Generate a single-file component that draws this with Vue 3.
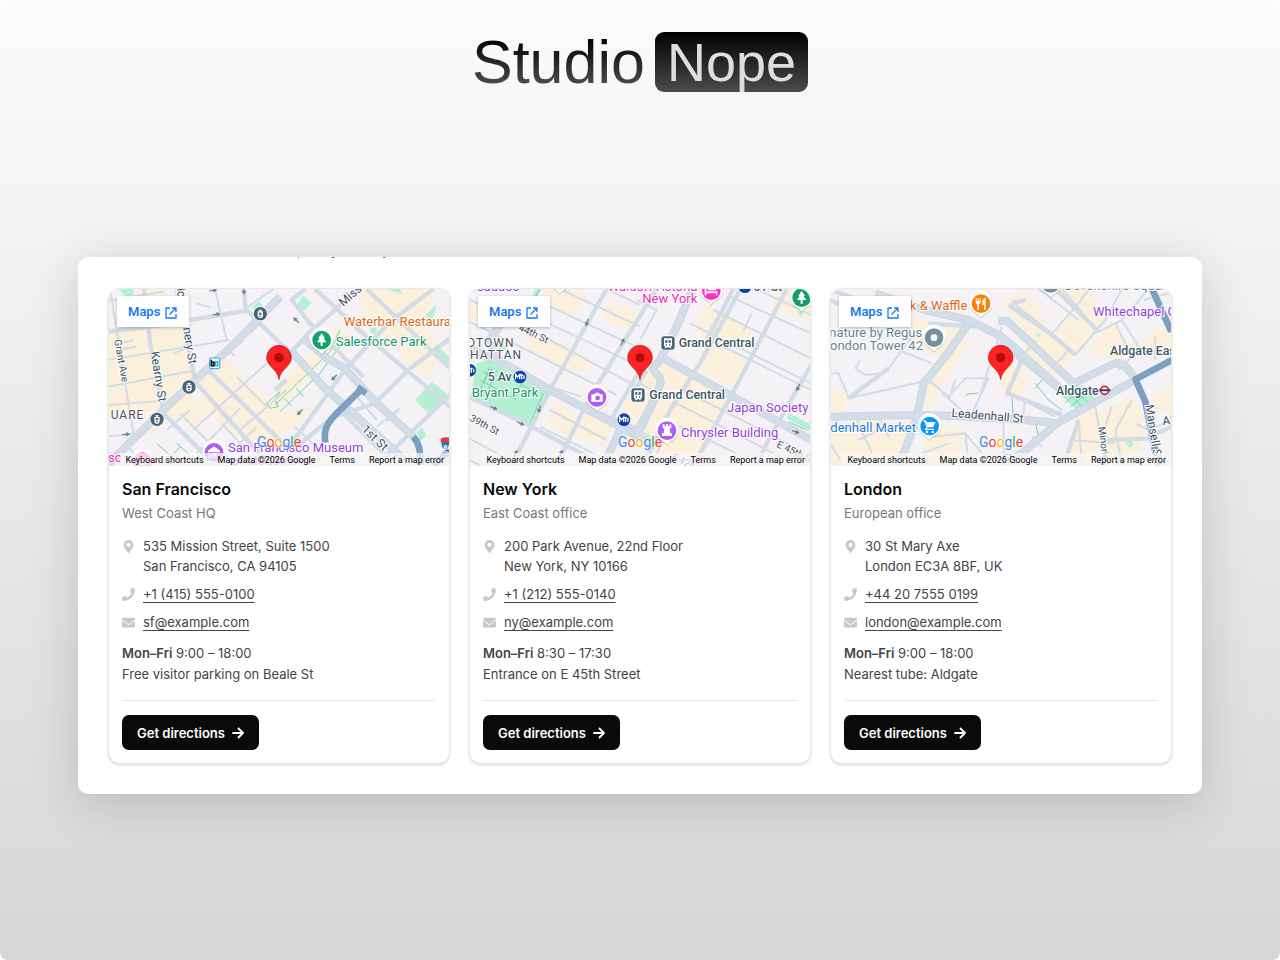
<script setup>
const pin = 'M0 66C-3 48-10 42-22 29C-32 18-37 10-37 0A37 37 0 1 1 37 0C37 10 32 18 22 29C10 42 3 48 0 66Z'
const drop = 'M0 42C-6 32-18 29-26 20A35 35 0 1 1 26 20C18 29 6 32 0 42Z'

const offices = [
  {
    city: 'San Francisco', role: 'West Coast HQ', view: '24 27 1026 531', pinX: 537,
    address: ['535 Mission Street, Suite 1500', 'San Francisco, CA 94105'],
    phone: '+1 (415) 555-0100', mail: 'sf@example.com',
    hours: '9:00 – 18:00', note: 'Free visitor parking on Beale St',
    blocks: 'M24 155L250 130L285 300L190 390L24 405ZM75 55L135 27L200 27L200 70L75 90ZM300 290L372 232L450 310L540 390L540 480L400 470L300 370ZM150 400L250 330L330 400L290 450L230 400L170 460L110 460ZM765 27H985L1000 60L965 130L1025 200L990 290L915 250L895 200L820 145ZM525 330L710 140L750 165L570 350L525 400ZM525 400L645 380L570 450L525 470Z',
    greens: 'M57 27H100V48H75ZM453 85L478 62L495 90ZM590 75L610 47L634 68L612 92ZM945 360L995 305L1047 345L990 405ZM1005 190L1050 235V255L1008 215ZM860 27H900L905 42ZM974 110L1010 72L1000 115ZM810 145L830 142L828 162L812 160ZM950 458L965 442L980 465L960 485Z',
    thin: 'M30 27L100 460M24 240L390 180M24 320L280 272M24 375L190 362M24 470L110 460M24 62L190 35M345 27L380 180M180 80V130M220 220L270 200M410 290L500 380M365 430L430 500M430 180L390 215L405 228M450 160L480 130M290 70L330 82M520 27L430 90M240 400L350 510M200 450L270 390M280 450L500 250M290 520L420 385M420 450L560 330M370 540L470 440M725 100L780 160M830 440L900 385L860 425M585 440L680 530M770 350L830 420M60 190L100 180M50 210L110 200',
    mid: 'M132 27L152 200L190 390M230 27L285 300M24 155L250 128M270 120L440 92M430 27L438 92M280 300L510 556M320 265L580 520M435 85L525 175L575 220M525 270L625 160L705 90L775 27M525 330L560 300M615 27L575 60L630 130L790 290M800 27L1050 265M645 27L800 170L1050 380M560 510L735 270L865 130L1000 27M590 500L700 410L825 370L925 270L1050 175M830 556L1050 345M730 400L870 540M190 400L330 540',
    wide: 'M540 50L420 175L190 390L24 552M575 215L675 325L920 545M610 175L680 235L735 265M735 265L825 365L940 470',
    highway: 'M780 332L708 402C680 432 670 450 676 488M940 470C965 500 960 530 960 556M1050 510L1000 556M772 322L798 340',
    trail: 'M525 375L690 215L720 150M540 395L660 280L740 170M555 355L575 380M590 325L610 350M640 275L660 290M675 230L695 240M500 370L540 335L525 360L535 380L510 385ZM90 505L110 530M170 490L215 530L240 500M230 490L270 525M720 90L760 140M470 480L490 500',
    labels: [
      { t: 'UARE', x: 32, y: 416, c: 'area' }, { t: 'Kearny St', x: 152, y: 216, r: 81, c: 'road' },
      { t: 'Grant Ave', x: 43, y: 180, r: 80, c: 'road small' }, { t: 'nery St', x: 249, y: 144, r: 81, c: 'road' },
      { t: 'lc', x: 230, y: 26, r: 81, c: 'road' },
      { t: 'Miss', x: 730, y: 81, r: -42, c: 'road' }, { t: '1st St', x: 783, y: 450, r: 44, c: 'road' },
      { t: 'Waterbar Restaurant', x: 731, y: 138, c: 'orange' }, { t: 'Salesforce Park', x: 707, y: 199, c: 'green' },
      { t: 'San Francisco Museum', x: 384, y: 517, c: 'purple' }, { t: 'of Modern Art', x: 394, y: 556, c: 'purple' },
      { t: 'sc', x: 24, y: 545, c: 'pink' }
    ],
    pins: [{ x: 665, y: 180, f: '#0fa36b', i: 'tree' }, { x: 342, y: 517, f: '#b15cf4', i: 'museum' }, { x: 128, y: 545, f: '#ff50c8', i: 'dot' }],
    stops: [{ x: 481, y: 101 }, { x: 267, y: 321 }, { x: 171, y: 418 }],
    arrows: [{ x: 350, y: 103, r: -8 }, { x: 340, y: 31, r: -8 }, { x: 432, y: 33, r: 85 }, { x: 79, y: 463, r: -5 }, { x: 588, y: 120, r: 225 }, { x: 702, y: 293, r: 135 }, { x: 599, y: 397, r: 135 }]
  },
  {
    city: 'New York', role: 'East Coast office', view: '27 27 1026 531', pinX: 540,
    address: ['200 Park Avenue, 22nd Floor', 'New York, NY 10166'],
    phone: '+1 (212) 555-0140', mail: 'ny@example.com',
    hours: '8:30 – 17:30', note: 'Entrance on E 45th Street',
    blocks: 'M240 27H360L380 60L340 110L270 85ZM445 60L530 100L510 150L430 120ZM200 155L265 170L395 235L375 280L310 270L210 215ZM27 70L110 85L90 120L27 110ZM280 365L350 395L330 470L260 430ZM385 385L465 425L430 500L350 470ZM500 320L600 250L810 350L770 420L640 540L480 430ZM740 75L800 100L880 150L850 210L740 180L700 140ZM740 185L860 240L820 320L700 260ZM940 27H1053V125L940 85ZM27 440L45 450L27 470ZM620 390L770 450L720 556L590 530Z',
    greens: 'M50 250L85 240L262 338L205 434L30 360ZM225 27H245L232 50L217 47ZM985 400L1053 432V455L980 415ZM1012 95L1030 85L1025 110ZM110 205L130 190L140 210Z',
    thin: 'M27 58L270 180L540 325M27 125L110 165L350 285L470 345M160 80L540 260M205 50L540 205M300 27L540 140M27 475L180 556M27 540L60 556M240 440L420 530M270 390L440 480M300 340L450 410M440 27L540 75M750 180L1053 330M690 130L1053 310M760 90L1053 235M810 50L1053 160M890 27L1053 105M660 325L1000 500M650 370L960 530M640 430L850 530M720 290L800 330M850 155L875 100M530 60L590 90L540 180M540 310L600 345L550 450M270 320L365 350M770 450L700 556M590 520L640 430M500 430L570 470',
    mid: 'M440 27L270 330L155 556M590 27L390 350L290 556M740 180L820 27M842 27L720 250L630 390L550 556M980 27L818 340L700 556M1053 255L925 480L890 556M27 350L205 435L420 550M540 270L455 415L540 450M27 30L60 27M560 270L520 340',
    wide: 'M27 205L150 260L270 330L480 440L570 490M698 27L650 140L600 240L578 265C585 285 610 290 600 315C590 350 545 430 528 460M608 235L810 345L1053 480M490 430L430 556M165 75L80 190M120 245L80 175',
    highway: '',
    trail: 'M90 260L65 320M110 270L85 330M60 300L170 360M70 275L120 305M185 315L230 340M210 430L250 340M165 350L190 300M55 335L95 265M985 425L1040 450M240 27L220 60',
    labels: [
      { t: 'esaudos', x: 30, y: 33, c: 'purple' }, { t: 'Waldorf Astoria', x: 443, y: 32, c: 'pink' },
      { t: 'New York', x: 547, y: 70, c: 'pink' }, { t: '51 St', x: 880, y: 34, c: 'station' },
      { t: '44th St', x: 174, y: 149, r: 26, c: 'road small' }, { t: 'DTOWN', x: 22, y: 202, c: 'area' },
      { t: 'HATTAN', x: 30, y: 238, c: 'area' }, { t: '5 Av', x: 83, y: 304, c: 'station' },
      { t: 'Bryant Park', x: 35, y: 350, c: 'green' }, { t: '39th St', x: 27, y: 421, r: 28, c: 'road small' },
      { t: 'Grand Central', x: 656, y: 201, c: 'station' }, { t: 'Grand Central', x: 568, y: 357, c: 'station' },
      { t: 'Japan Society', x: 801, y: 396, c: 'purple' }, { t: 'Chrysler Building', x: 663, y: 471, c: 'purple' },
      { t: 'E 45th St', x: 948, y: 500, r: 25, c: 'road small' }, { t: 'E 42nd St', x: 632, y: 537, r: 25, c: 'road small' }
    ],
    pins: [{ x: 300, y: 0, f: '#78909c', i: 'dot' }, { x: 411, y: 352, f: '#b15cf4', i: 'camera' }, { x: 754, y: 32, f: '#ff2fc4', i: 'bed' }, { x: 1025, y: 53, f: '#0fa36b', i: 'tree' }, { x: 621, y: 452, f: '#b15cf4', i: 'rook' }],
    trains: [{ x: 624, y: 188 }, { x: 534, y: 344 }],
    metros: [{ x: 29, y: 271 }, { x: 180, y: 291 }, { x: 492, y: 419 }, { x: 855, y: 20 }],
    arrows: [{ x: 381, y: 128, r: 110 }, { x: 488, y: 185, r: -65 }, { x: 238, y: 388, r: 110 }, { x: 102, y: 384, r: 25 }, { x: 183, y: 431, r: 25 }, { x: 167, y: 520, r: -65 }, { x: 303, y: 520, r: -65 }, { x: 1014, y: 323, r: 115 }, { x: 1008, y: 456, r: 20 }]
  },
  {
    city: 'London', role: 'European office', view: '24 27 1026 531', pinX: 536,
    address: ['30 St Mary Axe', 'London EC3A 8BF, UK'],
    phone: '+44 20 7555 0199', mail: 'london@example.com',
    hours: '9:00 – 18:00', note: 'Nearest tube: Aldgate',
    blocks: 'M150 27L270 50L260 90L150 60ZM275 115L430 145L370 230L310 220L250 180ZM24 320L75 340L60 400L24 380ZM24 470L100 410L230 430L270 410L240 520L150 556H24ZM310 310L420 180L440 190L350 330L310 400ZM540 60L620 40L690 160L640 180L560 100ZM540 230L620 300L600 350L540 330ZM700 27H800L850 130L830 150L765 225L690 165L760 80ZM610 190L690 160L760 220L700 290L610 220ZM810 410L930 350L965 400L950 556H840L800 480ZM320 430L430 450L400 556H290L310 480ZM960 180L1050 120V200L970 240ZM1000 340L1050 320V400L1000 390ZM760 420L820 380L810 556H740ZM800 200L870 130L930 200L900 240L810 220Z',
    greens: 'M722 350L760 315L820 330L810 370L760 385ZM910 490L920 475L935 490L925 505ZM640 155L655 165L650 172Z',
    thin: 'M24 280H50L80 355M80 355L200 265L285 150M80 355L300 305M100 265L130 285L175 280M100 265L115 240M24 410L280 405M100 410L150 520M170 410L200 470M230 210L330 250M24 490L55 540M110 480L190 440M320 300L380 350L430 295H500L450 400M400 300L380 360M470 360L540 140M360 340L430 400M330 470L430 460L480 520M300 520L380 490M430 460L440 556M580 75L690 160L760 225L850 120L900 27M720 27L830 155L900 120L950 200M690 160L770 70L800 27M650 27L770 120M600 230L555 335L700 410M610 355L600 430M740 210L690 265M640 180L600 230M880 130L930 230L890 270M545 420V556M630 470L660 500M820 380L850 556M930 360L880 450L900 556M770 420L780 556M740 480L880 490M870 380L850 440M980 27L900 120M965 60L1040 40M980 450L1050 420M940 430L1000 460M1000 240V170',
    mid: 'M24 30L160 75M24 60L90 90M320 130L460 140M80 355L200 265M24 408L280 405M530 190L610 250L710 330M610 60L570 70M700 27L830 155M600 240L555 340L720 405M760 225L690 165L560 75M840 480L990 475M610 360L720 405M725 556L770 420M1005 460L1050 440',
    wide: 'M160 40L300 88L440 120L540 170L730 340M440 130L370 230L305 310L280 430L230 556M24 410L280 405L400 408L610 420L705 430L930 305M528 122H555L755 310L875 252C900 240 920 265 940 300M705 430L600 520L540 550',
    highway: 'M1050 240L940 298L970 365L1008 556M990 27L1048 155',
    trail: 'M430 348C445 335 455 345 470 338M640 310L680 360L720 390M680 275L640 325M570 355L575 430M640 430L650 470M735 335L780 380M750 320L800 370M730 370L770 330M745 380L800 335',
    labels: [
      { t: 'Duck & Waffle', x: 196, y: 90, c: 'orange' }, { t: 'nature by Regus', x: 22, y: 171, c: 'slate' },
      { t: 'ondon Tower 42', x: 24, y: 210, c: 'slate' }, { t: 'Leadenhall St', x: 388, y: 410, r: 5, c: 'road' },
      { t: 'denhall Market', x: 25, y: 456, c: 'blue' }, { t: 'Devonshire Square', x: 728, y: 31, c: 'slate' },
      { t: 'Whitechapel Gallery', x: 813, y: 109, c: 'purple' }, { t: 'Aldgate East', x: 864, y: 224, c: 'station' },
      { t: 'Aldgate', x: 702, y: 345, c: 'station' }, { t: 'Mansell St', x: 970, y: 376, r: 81, c: 'road' },
      { t: 'Minories', x: 829, y: 441, r: 83, c: 'road small' }, { t: 'Al', x: 1022, y: 435, r: -5, c: 'road' },
      { t: 'St', x: 548, y: 545, r: -20, c: 'road small' }
    ],
    pins: [{ x: 477, y: 71, f: '#ff8000', i: 'food' }, { x: 336, y: 173, f: '#78909c', i: 'dot' }, { x: 323, y: 438, f: '#0a95ff', i: 'cart' }, { x: 686, y: 10, f: '#78909c', i: 'dot' }],
    arrows: []
  }
]

const icons = {
  tree: 'M0-21L10-5H6L14 7H3V18H-3V7H-14L-6-5H-10Z',
  museum: 'M-18-5L0-18L18-5V0H-18ZM-16 3H-11V17H-16ZM11 3H16V17H11ZM-7 3H7V17H3V8L0 12L-3 8V17H-7Z',
  dot: 'M0-10A10 10 0 1 1 0 10A10 10 0 1 1 0-10Z',
  camera: 'M-17-9H-8L-4-14H5L9-9H17V13H-17ZM2-5A7 7 0 1 0 2 9A7 7 0 1 0 2-5Z',
  bed: 'M-20-15H-15V2H18V14H14V8H-15V14H-20ZM-10-10H15V-1H-10Z',
  rook: 'M-13-19H-7V-13H-3V-19H3V-13H7V-19H13V-7H8L10 8H15V16H-15V8H-10L-8-7H-13Z',
  food: 'M-16-17H-13V-8H-10V-17H-7V-8H-4V-17H-1V-5Q-1 0-6 1V18H-11V1Q-16 0-16-5ZM14-18V18H9V4H4V-6Q5-16 14-18Z',
  cart: 'M-19-17H-11L-9-12H18L10 4H-7L-9 8H13V12H-14L-10 2L-15-13H-19ZM-8 14A4 4 0 1 0-8 22A4 4 0 1 0-8 14ZM9 14A4 4 0 1 0 9 22A4 4 0 1 0 9 14Z'
}
</script>

<template>
  <main class="page">
    <h1 class="logo"><span class="logo-word">Studio</span><span class="logo-box">Nope</span></h1>

    <section class="panel">
      <svg class="fragments" viewBox="0 0 1124 2" preserveAspectRatio="xMinYMin slice" aria-hidden="true">
        <path d="M220 0h1v1h-1zM253 0h4l-1 1h-2zM305 0h3l-1 1h-2z" fill="#777" />
      </svg>
      <article v-for="o in offices" :key="o.city" class="card">
        <div class="map">
          <svg class="map-art" :viewBox="o.view" preserveAspectRatio="xMidYMid slice" role="img" :aria-label="`Map of ${o.city}`">
            <rect x="0" y="0" width="1080" height="600" fill="#f4f2f4" />
            <path :d="o.blocks" fill="#faf0dc" />
            <path :d="o.greens" fill="#b4f1d2" />
            <g fill="none" stroke-linejoin="round">
              <path :d="o.trail" stroke="#72d3a8" stroke-width="3" />
              <path :d="o.thin" stroke="#d3dce5" stroke-width="6" />
              <path :d="o.mid" stroke="#d3dce5" stroke-width="13" />
              <path :d="o.wide" stroke="#c7d2de" stroke-width="24" />
              <path :d="o.wide" stroke="#d3dde7" stroke-width="20" />
              <path :d="o.highway" stroke="#7d9fc2" stroke-width="20" />
            </g>
            <g v-for="(a, i) in o.arrows" :key="'a' + i" :transform="`translate(${a.x} ${a.y}) rotate(${a.r})`">
              <path d="M-12-2H0V-7L12 0L0 7V2H-12Z" fill="#71808f" />
            </g>
            <g v-for="(s, i) in o.stops" :key="'s' + i" :transform="`translate(${s.x} ${s.y})`">
              <circle r="23" fill="#fff" opacity=".7" /><circle r="20" fill="#456477" />
              <path d="M-5-12H5V-9H2V-7H8V8L4 13H-4L-8 8V-7H-2V-9H-5ZM-4-3V3H4V-3ZM-3 6V9H3V6Z" fill="#fff" fill-rule="evenodd" />
            </g>
            <g v-for="(s, i) in o.trains" :key="'t' + i" :transform="`translate(${s.x} ${s.y})`">
              <rect x="-23" y="-22" width="46" height="45" rx="11" fill="#fff" /><rect x="-20" y="-19" width="40" height="40" rx="9" fill="#456477" />
              <path d="M-12-13H12V10L7 13L10 17H5L3 14H-3L-5 17H-10L-7 13L-12 10ZM-8-8V1H-2V-8ZM2-8V1H8V-8ZM-7 5V9H-3V5ZM3 5V9H7V5Z" fill="#fff" fill-rule="evenodd" />
            </g>
            <g v-for="(s, i) in o.metros" :key="'m' + i" :transform="`translate(${s.x} ${s.y})`">
              <circle r="19" fill="#0d3fae" /><path d="M-13 7V-7L-7 0L-1-7V7M0-6H9M5-6V7M12-5V6" fill="none" stroke="#fff" stroke-width="4" />
            </g>
            <template v-if="o.city === 'San Francisco'">
              <rect x="329" y="234" width="30" height="32" rx="3" fill="#e9f8ff" stroke="#26a9e5" stroke-width="3" />
              <path d="M334 239V257H342V247H334" fill="none" stroke="#111" stroke-width="5" /><path d="M346 248V257H353V246H344" fill="none" stroke="#18a7e8" stroke-width="4" />
              <path d="M1022 480Q1038 468 1060 480V514Q1045 522 1034 514Q1020 500 1022 480Z" fill="#3272b5" stroke="#fff" stroke-width="3" />
              <path d="M1022 476Q1038 468 1060 476V486H1022Z" fill="#df3e3e" />
              <text x="1029" y="510" class="shield">80</text>
            </template>
            <g v-if="o.city === 'London'">
              <circle cx="848" cy="331" r="12" fill="#fff" stroke="#e32119" stroke-width="5" /><path d="M831 331H865" stroke="#1d3b93" stroke-width="6" />
            </g>
            <text v-for="(l, i) in o.labels" :key="'l' + i" class="label" :class="l.c" :transform="`translate(${l.x} ${l.y}) rotate(${l.r || 0})`">{{ l.t }}</text>
            <g v-for="(p, i) in o.pins" :key="'p' + i" :transform="`translate(${p.x} ${p.y})`">
              <path :d="drop" fill="#637078" opacity=".35" transform="translate(0 3)" /><path :d="drop" fill="#fff" />
              <circle r="28" :fill="p.f" /><path :d="icons[p.i]" fill="#fff" fill-rule="evenodd" />
            </g>
            <path :d="pin" :transform="`translate(${o.pinX} 233)`" fill="#fb2323" stroke="#b91010" stroke-width="2" />
            <circle :cx="o.pinX" cy="233" r="14" fill="#b40b0b" />
          </svg>
          <a class="maps-link" href="#">Maps
            <svg viewBox="0 0 12 12" aria-hidden="true"><path d="M5 1H1V11H11V7M7 1H11V5M11 1L4.500 7.500" fill="none" stroke="currentColor" stroke-width="1.300" /></svg>
          </a>
          <span class="google" aria-label="Google"><i class="b">G</i><i class="r">o</i><i class="y">o</i><i class="b">g</i><i class="g">l</i><i class="r">e</i></span>
          <div class="map-footer">
            <button type="button">Keyboard shortcuts</button><span>Map data ©2026 Google</span><a href="#">Terms</a><a href="#">Report a map error</a>
          </div>
        </div>

        <div class="body">
          <h2>{{ o.city }}</h2>
          <p class="role">{{ o.role }}</p>
          <address>
            <div class="row">
              <svg viewBox="0 0 384 512" aria-hidden="true"><path d="M172 502C27 291 0 269 0 192a192 192 0 1 1 384 0c0 77-27 99-172 310a24 24 0 0 1-40 0ZM192 272a80 80 0 1 0 0-160a80 80 0 0 0 0 160Z" /></svg>
              <span>{{ o.address[0] }}<br>{{ o.address[1] }}</span>
            </div>
            <div class="row">
              <svg viewBox="0 0 512 512" aria-hidden="true"><path d="M493 25L389 1c-11-3-23 3-27 13l-48 112c-4 10-1 21 7 28l61 50a371 371 0 0 1-178 178l-50-61c-7-8-18-11-28-7L14 362c-10 4-16 16-13 27l24 104c3 11 12 19 24 19c256 0 463-207 463-463c0-12-8-21-19-24Z" /></svg>
              <a href="#">{{ o.phone }}</a>
            </div>
            <div class="row">
              <svg viewBox="0 0 512 512" aria-hidden="true"><path d="M502 191c4-3 10 0 10 5v204a48 48 0 0 1-48 48H48a48 48 0 0 1-48-48V196c0-5 6-8 10-5c22 18 52 40 155 115c21 15 57 48 91 48s72-33 92-48c103-75 132-97 154-115ZM256 320c23 0 57-29 74-41c132-96 142-105 173-129c6-4 9-11 9-18v-20a48 48 0 0 0-48-48H48a48 48 0 0 0-48 48v20c0 7 3 14 9 18c31 24 41 33 173 129c17 12 51 41 74 41Z" /></svg>
              <a href="#">{{ o.mail }}</a>
            </div>
          </address>
          <p class="hours"><strong>Mon–Fri</strong> {{ o.hours }}<br>{{ o.note }}</p>
          <div class="actions">
            <a class="directions" href="#">Get directions
              <svg viewBox="0 0 12 12" aria-hidden="true"><path d="M1 6H11M6.500 1.500L11 6L6.500 10.500" fill="none" stroke="currentColor" stroke-width="1.800" stroke-linecap="round" stroke-linejoin="round" /></svg>
            </a>
          </div>
        </div>
      </article>
    </section>
  </main>
</template>

<style>
html, body { margin: 0; background: #fff; }
</style>

<style scoped>
* { box-sizing: border-box; }
.page { min-height: 100vh; padding: 32px 78px; border-radius: 8px; background: linear-gradient(#fbfbfb, #d7d7d7); font-family: Inter, "Liberation Sans", sans-serif; color: #444; }
.logo { display: flex; justify-content: center; gap: 10px; margin: 0 0 165px; height: 60px; font-family: "Liberation Sans", Arial, sans-serif; font-weight: 400; }
.logo-word { font-size: 61px; line-height: 60px; background: linear-gradient(#000 10%, #4d4d4d 90%); background-clip: text; color: transparent; }
.logo-box { padding: 0 12px; border-radius: 9px; font-size: 54px; line-height: 60px; overflow: hidden; background: linear-gradient(#000, #4b4b4b); color: #dedede; }
.panel { position: relative; display: grid; grid-template-columns: repeat(3, minmax(0, 1fr)); gap: 19px; padding: 31px 30px 30px; border-radius: 10px; background: #fff; box-shadow: 0 10px 50px rgba(0, 0, 0, .16); }
.fragments { position: absolute; top: 0; left: 0; width: 100%; height: 2px; }
.card { border: 1px solid #e9e9e9; border-radius: 12px; overflow: hidden; background: #fff; box-shadow: 0 1px 3px rgba(0, 0, 0, .16); }
.map { position: relative; height: 177px; overflow: hidden; font-family: Roboto, "Liberation Sans", sans-serif; }
.map-art { display: block; width: 100%; height: 100%; }
.label { font-family: Roboto, sans-serif; font-size: 39px; paint-order: stroke; stroke: #fff; stroke-width: 6px; stroke-linejoin: round; }
.area { font-size: 36px; fill: #4b5158; letter-spacing: 3px; }
.road { font-size: 36px; fill: #3d4f61; }
.small { font-size: 30px; }
.orange { fill: #df6417; }
.green { fill: #16936a; }
.purple { fill: #9141d8; }
.pink { fill: #ee28bd; }
.station { font-size: 37px; fill: #3c5668; font-weight: 500; }
.slate { fill: #65838f; }
.blue { fill: #167cdb; }
.shield { font: 700 24px Roboto, sans-serif; fill: #fff; }
.maps-link { position: absolute; top: 7px; left: 8px; display: flex; align-items: center; gap: 5px; height: 31px; padding: 0 12px 0 11px; background: #fff; box-shadow: 0 1px 3px rgba(0, 0, 0, .25); color: #1a7bea; font-size: 13px; font-weight: 600; text-decoration: none; }
.maps-link svg { width: 12px; height: 12px; margin-top: 2px; }
.google { position: absolute; bottom: 14px; left: 50%; transform: translateX(-50%); font: 400 14px/20px Roboto, sans-serif; text-shadow: 0 0 2px #fff, 0 0 2px #fff; }
.google i { font-style: normal; }
.b { color: #4285f4; }
.r { color: #ea4335; }
.y { color: #fbbc05; }
.g { color: #34a853; }
.map-footer { position: absolute; right: 0; bottom: 0; display: flex; gap: 14px; height: 13px; padding: 0 5px; background: rgba(245, 245, 245, .75); font-size: 9px; line-height: 14px; white-space: nowrap; }
.map-footer button, .map-footer a, .map-footer span { padding: 0; border: 0; background: none; font: inherit; color: #000; text-decoration: none; }
.body { padding: 12px 13px 13px; font-size: 13px; line-height: 20px; }
h2 { margin: 0; font-size: 16px; line-height: 22px; font-weight: 600; color: #0a0a0a; }
.role { margin: 3px 0 13px; color: #777; }
address { display: grid; gap: 8px; font-style: normal; }
.row { display: flex; gap: 8px; }
.row svg { flex: none; width: 13px; height: 13px; margin-top: 4px; fill: #c8c8c8; }
.row a { color: inherit; text-decoration: underline; text-underline-offset: 3px; }
.hours { margin: 11px 0 15px; line-height: 21px; }
.hours strong { font-weight: 600; }
.actions { padding-top: 14px; border-top: 1px solid #e9e9e9; }
.directions { display: inline-flex; align-items: center; gap: 7px; height: 35px; padding: 0 15px; border-radius: 7px; background: #0a0a0a; color: #fff; font-weight: 600; text-decoration: none; }
.directions svg { width: 12px; height: 12px; }
</style>
